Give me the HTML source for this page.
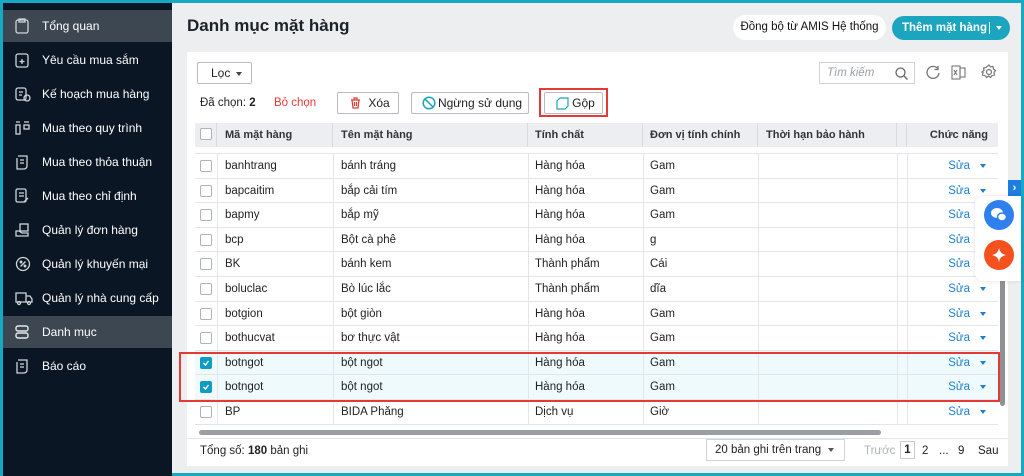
<!DOCTYPE html>
<html><head><meta charset="utf-8"><style>
*{box-sizing:border-box;margin:0;padding:0}
body{width:1024px;height:476px;overflow:hidden;background:#16a9c4;font-family:"Liberation Sans","DejaVu Sans",sans-serif;font-size:12px;color:#222;position:relative}
.side{position:absolute;left:3px;top:3px;width:169px;height:473px;background:#0b1624}
.nav{position:absolute;left:0;width:169px;height:32px;color:#fff;font-size:12px;line-height:32px;padding-left:39px}
.nav.act{background:#3d4752}
.nav svg{position:absolute;left:12px;top:8px}
.main{position:absolute;left:172px;top:3px;width:849px;height:470px;background:#eceef0}
.abs{position:absolute}
.card{position:absolute;left:15px;top:49px;width:821px;height:414px;background:#fff}
.btn{position:absolute;border:1px solid #b8bcc2;border-radius:2px;background:#fff;height:22px;line-height:20px;font-size:12px;text-align:center}
.th{position:absolute;top:71px;height:24px;line-height:24px;font-weight:bold;font-size:11px;color:#333;border-right:1px solid #d8dade}
.row{position:absolute;left:8px;width:803px;height:25px;border-bottom:1px solid #e3e5e8;font-size:11.5px;line-height:24px}
.row span{position:absolute;top:0}
.cb{position:absolute;left:5px;top:6px;width:12px;height:12px;border:1px solid #aeb3b9;border-radius:2px;background:#fff}
.cb.on{background:#0f9bc4;border-color:#0f9bc4}
.vl{position:absolute;top:0;height:25px;border-left:1px solid #e3e5e8}
.sua{color:#1c7fd0;right:28px}
.tri{position:absolute;right:12px;top:10px;width:0;height:0;border-left:3.5px solid transparent;border-right:3.5px solid transparent;border-top:4px solid #1c7fd0}
</style></head><body>
<div class="side">
 <div class="nav act" style="top:7px"><svg width="14" height="16" viewBox="0 0 14 16" fill="none" stroke="#cfd4da" stroke-width="1.3"><rect x="1" y="2" width="12" height="13" rx="2"/><rect x="4" y="1" width="6" height="3"/></svg>Tổng quan</div>
 <div class="nav" style="top:41px"><svg width="14" height="16" viewBox="0 0 14 16" fill="none" stroke="#cfd4da" stroke-width="1.3"><rect x="1" y="2" width="12" height="13" rx="2"/><path d="M7 7v5M4.5 9.5h5"/></svg>Yêu cầu mua sắm</div>
 <div class="nav" style="top:75px"><svg width="16" height="16" viewBox="0 0 16 16" fill="none" stroke="#cfd4da" stroke-width="1.3"><rect x="1" y="2" width="10" height="12" rx="2"/><circle cx="12" cy="12" r="3"/><path d="M4 6h4M4 9h3"/></svg>Kế hoạch mua hàng</div>
 <div class="nav" style="top:109px"><svg width="16" height="16" viewBox="0 0 16 16" fill="none" stroke="#cfd4da" stroke-width="1.3"><rect x="1" y="5" width="4" height="9"/><rect x="9" y="5" width="5" height="4"/><path d="M1 2h4M9 2h5"/></svg>Mua theo quy trình</div>
 <div class="nav" style="top:143px"><svg width="14" height="16" viewBox="0 0 14 16" fill="none" stroke="#cfd4da" stroke-width="1.3"><path d="M3 2h9v10a3 3 0 0 1-3 3H2V4"/><path d="M5 6h4M5 9h4"/></svg>Mua theo thỏa thuận</div>
 <div class="nav" style="top:177px"><svg width="14" height="16" viewBox="0 0 14 16" fill="none" stroke="#cfd4da" stroke-width="1.3"><rect x="1" y="1" width="10" height="13" rx="1.5"/><path d="M4 5h5M4 8h5M9 14l4-4"/></svg>Mua theo chỉ định</div>
 <div class="nav" style="top:211px"><svg width="16" height="16" viewBox="0 0 16 16" fill="none" stroke="#cfd4da" stroke-width="1.3"><rect x="5" y="2" width="8" height="7"/><path d="M1 9h3l3 2h6v3H1z"/></svg>Quản lý đơn hàng</div>
 <div class="nav" style="top:245px"><svg width="16" height="16" viewBox="0 0 16 16" fill="none" stroke="#cfd4da" stroke-width="1.3"><circle cx="8" cy="8" r="6.5"/><path d="M5.5 10.5l5-5"/><circle cx="6" cy="6" r=".8"/><circle cx="10" cy="10" r=".8"/></svg>Quản lý khuyến mại</div>
 <div class="nav" style="top:279px"><svg width="18" height="16" viewBox="0 0 18 16" fill="none" stroke="#cfd4da" stroke-width="1.3"><path d="M1 3h10v9H1zM11 6h4l2 3v3h-6"/><circle cx="4" cy="13" r="1.5"/><circle cx="14" cy="13" r="1.5"/></svg>Quản lý nhà cung cấp</div>
 <div class="nav act" style="top:313px"><svg width="14" height="16" viewBox="0 0 14 16" fill="none" stroke="#e6e9ec" stroke-width="1.4"><rect x="1" y="2" width="12" height="5" rx="2"/><rect x="1" y="9" width="12" height="5" rx="2"/></svg>Danh mục</div>
 <div class="nav" style="top:347px"><svg width="14" height="16" viewBox="0 0 14 16" fill="none" stroke="#cfd4da" stroke-width="1.3"><path d="M3 2h9v10a3 3 0 0 1-3 3H2V4"/><path d="M5 6h4M5 9h4"/></svg>Báo cáo</div>
</div>
<div class="main">
 <div class="abs" style="left:15px;top:13px;font-size:17px;font-weight:bold;color:#1d2329">Danh mục mặt hàng</div>
 <div class="abs" style="left:561px;top:12px;width:153px;height:25px;border-radius:13px;background:#fff;line-height:25px;text-align:center;font-size:11.5px;color:#111">Đồng bộ từ AMIS Hệ thống</div>
 <div class="abs" style="left:720px;top:13px;width:118px;height:24px;border-radius:12px;background:#1ba5bf;line-height:24px;color:#fff;font-weight:bold;font-size:11.5px;padding-left:10px;white-space:nowrap">Thêm mặt hàng<span style="position:absolute;left:97px;top:6px;height:12px;border-left:1px solid #fff"></span><span style="position:absolute;left:104px;top:10px;border-left:3.5px solid transparent;border-right:3.5px solid transparent;border-top:4px solid #fff"></span></div>
 <div class="card">
  <div class="btn" style="left:10px;top:10px;width:55px;text-align:left;padding-left:13px">Lọc<span style="position:absolute;left:38px;top:9px;border-left:3.5px solid transparent;border-right:3.5px solid transparent;border-top:4px solid #444"></span></div>
  <div class="abs" style="left:632px;top:10px;width:96px;height:22px;border:1px solid #d0d4d8;color:#9aa0a6;font-style:italic;font-size:11.5px;line-height:20px;padding-left:7px">Tìm kiếm<svg style="position:absolute;right:6px;top:4px" width="13" height="13" fill="none" stroke="#666" stroke-width="1.3"><circle cx="5.5" cy="5.5" r="4.5"/><path d="M9 9l3.5 3.5"/></svg></div>
  <svg class="abs" style="left:739px;top:13px" width="14" height="14" fill="none" stroke="#777" stroke-width="1.3"><path d="M12 4A6 6 0 1 0 13 8"/><path d="M12 1v3.5H8.5"/></svg>
  <svg class="abs" style="left:764px;top:13px" width="16" height="15" fill="none" stroke="#777" stroke-width="1.1"><rect x="1" y="1" width="8" height="13"/><rect x="9" y="3" width="5" height="9"/><path d="M3 5l3 5M6 5l-3 5"/></svg>
  <svg class="abs" style="left:794px;top:12px" width="16" height="16" fill="none" stroke="#777" stroke-width="1.2"><circle cx="8" cy="8" r="2.5"/><path d="M8 1l1.5 2 2.5-.5.5 2.5 2 1.5-1.5 2 .5 2.5-2.5.5-1.5 2-2-1.5-2 1.5-1.5-2-2.5-.5.5-2.5L1 8l2-1.5L2.5 4 5 3.5z"/></svg>
  <div class="abs" style="left:13px;top:45px;font-size:11.5px">Đã chọn: <b>2</b></div>
  <div class="abs" style="left:87px;top:45px;font-size:11.5px;color:#e53935">Bỏ chọn</div>
  <div class="btn" style="left:150px;top:40px;width:62px"><svg style="position:absolute;left:12px;top:4px" width="11" height="12" fill="none" stroke="#e53935" stroke-width="1.2"><path d="M1 3h9M4 3V1h3v2M2 3l1 8h5l1-8M4.5 5v4M6.5 5v4"/></svg><span style="padding-left:22px">Xóa</span></div>
  <div class="btn" style="left:224px;top:40px;width:118px"><svg style="position:absolute;left:10px;top:3px" width="14" height="14" fill="none" stroke="#1aa3c0" stroke-width="1.5"><circle cx="7" cy="7" r="5.8"/><path d="M3 3l8 8"/></svg><span style="padding-left:20px">Ngừng sử dụng</span></div>
  <div class="abs" style="left:352px;top:36px;width:69px;height:29px;border:2px solid #e53935"></div>
  <div class="btn" style="left:357px;top:40px;width:59px"><svg style="position:absolute;left:11px;top:4px" width="13" height="13" fill="none" stroke="#1aa3c0" stroke-width="1.2"><path d="M4 1h8v8l-3 3H1V4z"/></svg><span style="padding-left:20px">Gộp</span></div>

  <div class="abs" style="left:8px;top:71px;width:803px;height:24px;background:#eceef1"></div>
  <div class="th" style="left:8px;width:22px"><div class="cb" style="top:5px"></div></div>
  <div class="th" style="left:30px;width:116px;padding-left:8px">Mã mặt hàng</div>
  <div class="th" style="left:146px;width:195px;padding-left:8px">Tên mặt hàng</div>
  <div class="th" style="left:341px;width:115px;padding-left:7px">Tính chất</div>
  <div class="th" style="left:456px;width:115px;padding-left:7px">Đơn vị tính chính</div>
  <div class="th" style="left:571px;width:139px;padding-left:8px">Thời hạn bảo hành</div>
  <div class="th" style="left:710px;width:10px"></div>
  <div class="th" style="left:720px;width:91px;text-align:right;padding-right:10px;border-right:none">Chức năng</div>
  <div class="abs" style="left:8px;top:95px;width:803px;height:7px;border-bottom:1px solid #e3e5e8"></div>

  <div id="rows"></div>
  <div class="abs" style="left:12px;top:378px;width:682px;height:5px;border-radius:3px;background:#9b9ea3"></div>
  <div class="abs" style="left:813px;top:222px;width:5px;height:132px;border-radius:3px;background:#8e9297"></div>
  <div class="abs" style="left:0;top:386px;width:821px;border-top:1px solid #e3e5e8"></div>
  <div class="abs" style="left:13px;top:393px;font-size:11.5px">Tổng số: <b>180</b> bản ghi</div>
  <div class="abs" style="left:519px;top:387px;width:139px;height:22px;border:1px solid #d0d4d8;font-size:11.5px;line-height:20px;padding-left:8px">20 bản ghi trên trang<span style="position:absolute;right:10px;top:8px;border-left:3.5px solid transparent;border-right:3.5px solid transparent;border-top:4px solid #555"></span></div>
  <div class="abs" style="left:677px;top:393px;font-size:11.5px;color:#b0b4b8">Trước</div>
  <div class="abs" style="left:713px;top:389px;width:15px;height:18px;border:1px solid #c8ccd0;font-size:11.5px;font-weight:bold;text-align:center;line-height:16px">1</div>
  <div class="abs" style="left:735px;top:393px;font-size:11.5px">2</div>
  <div class="abs" style="left:752px;top:393px;font-size:11.5px">...</div>
  <div class="abs" style="left:771px;top:393px;font-size:11.5px">9</div>
  <div class="abs" style="left:791px;top:393px;font-size:11.5px">Sau</div>
 </div>
 <div class="abs" style="left:7px;top:349px;width:821px;height:50px;border:2px solid #e53935"></div>
 <div class="abs" style="left:836px;top:177px;width:13px;height:16px;background:#1e7ee0;color:#fff;font-size:11px;line-height:16px;text-align:center;font-weight:bold">›</div>
 <div class="abs" style="left:803px;top:193px;width:46px;height:85px;background:#fff;border-radius:8px 0 0 8px;box-shadow:0 0 4px rgba(0,0,0,.12)"></div>
 <div class="abs" style="left:812px;top:197px;width:30px;height:30px;border-radius:50%;background:#2f80ed"><svg width="30" height="30" fill="#fff"><ellipse cx="13" cy="13" rx="6" ry="5"/><ellipse cx="18" cy="17" rx="4.5" ry="4" stroke="#2f80ed" stroke-width="1.5"/></svg></div>
 <div class="abs" style="left:812px;top:237px;width:30px;height:30px;border-radius:50%;background:#f4511e"><svg width="30" height="30" fill="#fff"><path d="M15 8q1 6 7 7q-6 1-7 7q-1-6-7-7q6-1 7-7z"/></svg></div>
</div>
<script>
var d=[["","","","",0],["banhtrang","bánh tráng","Hàng hóa","Gam",0],["bapcaitim","bắp cải tím","Hàng hóa","Gam",0],["bapmy","bắp mỹ","Hàng hóa","Gam",0],["bcp","Bột cà phê","Hàng hóa","g",0],["BK","bánh kem","Thành phẩm","Cái",0],["boluclac","Bò lúc lắc","Thành phẩm","dĩa",0],["botgion","bột giòn","Hàng hóa","Gam",0],["bothucvat","bơ thực vật","Hàng hóa","Gam",0],["botngot","bột ngot","Hàng hóa","Gam",1],["botngot","bột ngot","Hàng hóa","Gam",1],["BP","BIDA Phăng","Dịch vụ","Giờ",0]];
var h="";
for(var i=1;i<d.length;i++){var r=d[i],t=Math.round(102+(i-1)*24.6),t2=Math.round(102+i*24.6),hh=t2-t;
h+='<div class="row" style="top:'+t+'px;height:'+hh+'px;background:'+(r[4]?'#eefafc':'#fff')+'"><div class="cb'+(r[4]?' on':'')+'">'+(r[4]?'<svg width="10" height="10" style="position:absolute;left:0;top:0" fill="none" stroke="#fff" stroke-width="1.4"><path d="M2.5 5l2 2 3-4"/></svg>':'')+'</div>'+
'<div class="vl" style="left:22px"></div><div class="vl" style="left:138px"></div><div class="vl" style="left:333px"></div><div class="vl" style="left:448px"></div><div class="vl" style="left:563px"></div><div class="vl" style="left:702px"></div><div class="vl" style="left:712px"></div>'+
'<span style="left:30px">'+r[0]+'</span><span style="left:146px">'+r[1]+'</span><span style="left:340px">'+r[2]+'</span><span style="left:455px">'+r[3]+'</span><span class="sua">Sửa</span><i class="tri"></i></div>';}
document.getElementById("rows").innerHTML=h;
</script>
</body></html>
